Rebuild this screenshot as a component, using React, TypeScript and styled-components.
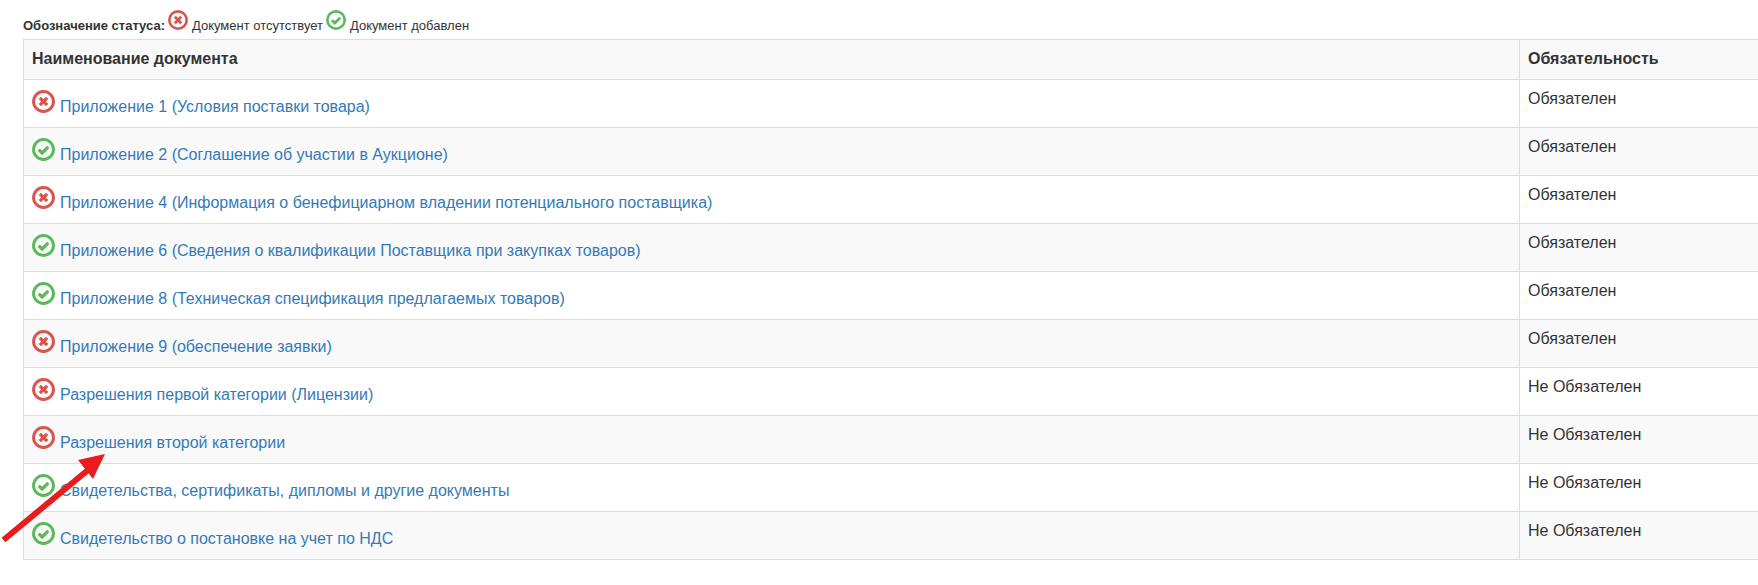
import React, { FC } from 'react';
import styled, { createGlobalStyle } from 'styled-components';

const GlobalStyle = createGlobalStyle`
    html, body {
        margin: 0;
        padding: 0;
        background: #fff;
        overflow: hidden;
    }
    body {
        font-family: "Liberation Sans", Arial, sans-serif;
        font-size: 16px;
        line-height: 20px;
        color: #333;
    }
`;

const Page = styled.div`
    position: relative;
    width: 1758px;
    height: 585px;
    overflow: hidden;
    padding: 10px 0 0 23px;
    box-sizing: border-box;
`;

const Legend = styled.div`
    display: flex;
    align-items: flex-end;
    height: 29px;
    font-size: 13px;
    line-height: 17px;
    padding-bottom: 5px;
    box-sizing: border-box;
    white-space: pre;
`;

const LegendTitle = styled.b`
    font-weight: bold;
    margin-right: 3px;
`;

const LegendIcon = styled.span`
    display: inline-flex;
    margin: 0 4px 4px 0;
`;

const LegendText = styled.span`
    margin-right: 3px;
`;

const Table = styled.table`
    width: 1760px;
    border-collapse: collapse;
    table-layout: fixed;
    background: #fff;
`;

const HeadCell = styled.th<{ $width?: number }>`
    width: ${p => (p.$width ? `${p.$width}px` : 'auto')};
    height: 40px;
    padding: 8px 8px 9px;
    box-sizing: border-box;
    border: 1px solid #ddd;
    background: #f9f9f9;
    font-size: 16px;
    line-height: 20px;
    font-weight: bold;
    text-align: left;
    vertical-align: middle;
`;

const Row = styled.tr<{ $striped: boolean }>`
    background: ${p => (p.$striped ? '#f9f9f9' : '#fff')};
`;

const Cell = styled.td`
    height: 48px;
    padding: 8px;
    box-sizing: border-box;
    border: 1px solid #ddd;
    vertical-align: top;
    line-height: 20px;
`;

const RequiredCell = styled(Cell)`
    padding-top: 9px;
`;

const NameInner = styled.div`
    display: flex;
    align-items: flex-end;
    height: 31px;
`;

const RowIcon = styled.span`
    display: inline-flex;
    margin: 0 5px 6px 0;
`;

const DocLink = styled.a`
    color: #337ab7;
    text-decoration: none;
    line-height: 20px;
    margin-bottom: 2px;
`;

const Arrow = styled.svg`
    position: absolute;
    left: 0;
    top: 450px;
`;

const StatusIcon: FC<{ ok: boolean; size: number }> = ({ ok, size }) => (
    <svg width={size} height={size} viewBox="0 0 24 24">
        <circle cx="12" cy="12" r="10.4" fill="none" stroke={ok ? '#5cb85c' : '#d9534f'} strokeWidth="3.1" />
        {ok ? (
            <path d="M7 12.2 L10.6 15.6 L17 9.2" fill="none" stroke="#5cb85c" strokeWidth="3.4" />
        ) : (
            <path d="M8.2 8.2 L15.8 15.8 M15.8 8.2 L8.2 15.8" fill="none" stroke="#d9534f" strokeWidth="3.4" />
        )}
    </svg>
);

const docs = [
    { name: 'Приложение 1 (Условия поставки товара)', ok: false, required: 'Обязателен' },
    { name: 'Приложение 2 (Соглашение об участии в Аукционе)', ok: true, required: 'Обязателен' },
    { name: 'Приложение 4 (Информация о бенефициарном владении потенциального поставщика)', ok: false, required: 'Обязателен' },
    { name: 'Приложение 6 (Сведения о квалификации Поставщика при закупках товаров)', ok: true, required: 'Обязателен' },
    { name: 'Приложение 8 (Техническая спецификация предлагаемых товаров)', ok: true, required: 'Обязателен' },
    { name: 'Приложение 9 (обеспечение заявки)', ok: false, required: 'Обязателен' },
    { name: 'Разрешения первой категории (Лицензии)', ok: false, required: 'Не Обязателен' },
    { name: 'Разрешения второй категории', ok: false, required: 'Не Обязателен' },
    { name: 'Свидетельства, сертификаты, дипломы и другие документы', ok: true, required: 'Не Обязателен' },
    { name: 'Свидетельство о постановке на учет по НДС', ok: true, required: 'Не Обязателен' },
];

const App: FC = () => (
    <Page>
        <GlobalStyle />
        <Legend>
            <LegendTitle>Обозначение статуса:</LegendTitle>
            <LegendIcon><StatusIcon ok={false} size={20} /></LegendIcon>
            <LegendText>Документ отсутствует</LegendText>
            <LegendIcon><StatusIcon ok size={20} /></LegendIcon>
            <LegendText>Документ добавлен</LegendText>
        </Legend>
        <Table>
            <thead>
                <tr>
                    <HeadCell $width={1496}>Наименование документа</HeadCell>
                    <HeadCell>Обязательность</HeadCell>
                </tr>
            </thead>
            <tbody>
                {docs.map((doc, i) => (
                    <Row key={doc.name} $striped={i % 2 === 1}>
                        <Cell>
                            <NameInner>
                                <RowIcon><StatusIcon ok={doc.ok} size={23} /></RowIcon>
                                <DocLink href="#">{doc.name}</DocLink>
                            </NameInner>
                        </Cell>
                        <RequiredCell>{doc.required}</RequiredCell>
                    </Row>
                ))}
            </tbody>
        </Table>
        <Arrow width="120" height="100" viewBox="0 450 120 100">
            <path d="M3.5 540 L88 470" stroke="#e81c1c" strokeWidth="6" fill="none" />
            <path d="M105 454 L78 460 L93 479 Z" fill="#e81c1c" />
        </Arrow>
    </Page>
);

export default App;
